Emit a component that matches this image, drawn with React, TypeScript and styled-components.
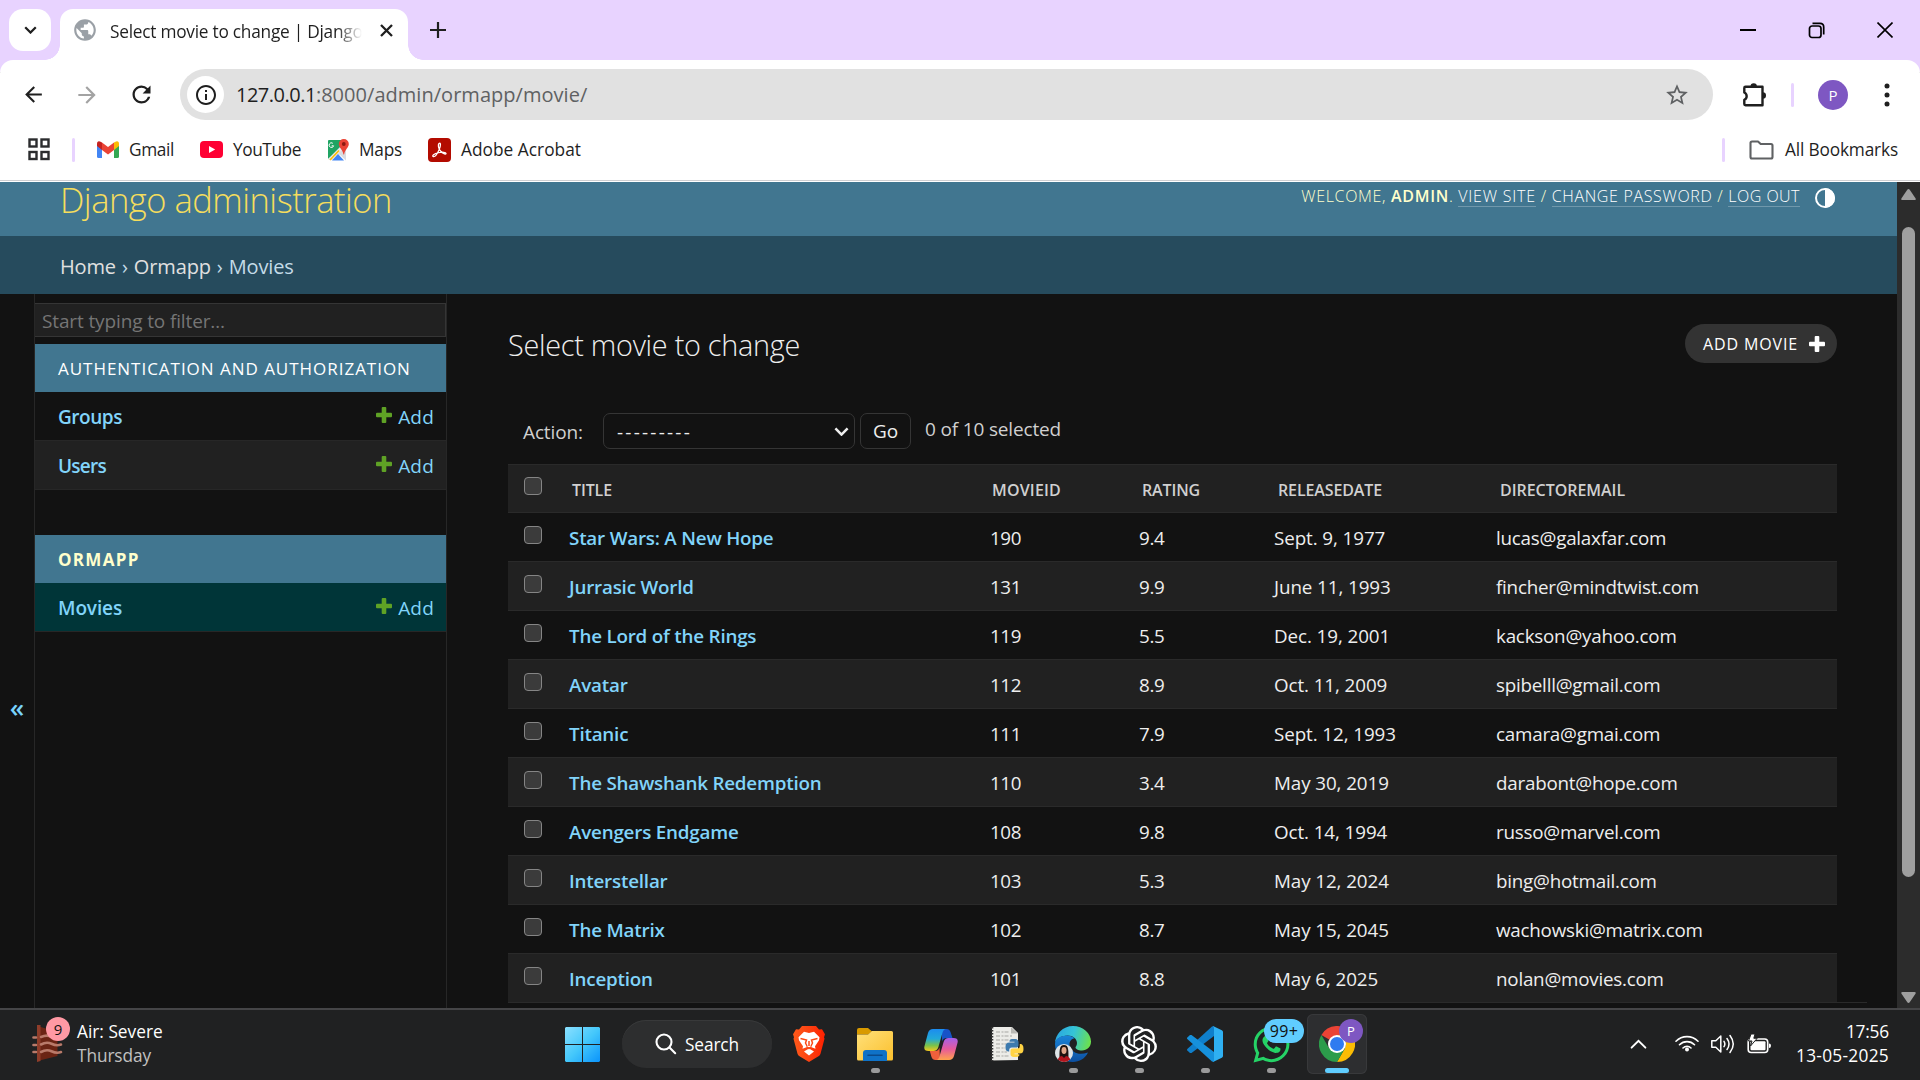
import React from 'react';
import styled, { createGlobalStyle, css } from 'styled-components';
import { MdArrowBack, MdArrowForward, MdRefresh, MdStarOutline, MdPublic, MdInfoOutline } from 'react-icons/md';
import { FaWhatsapp } from 'react-icons/fa';
import { SiOpenai } from 'react-icons/si';

const Global = createGlobalStyle`
  *, *::before, *::after { box-sizing: border-box; }
  body {
    margin: 0;
    background: #121212;
    font-family: "Open Sans", "Noto Sans", sans-serif;
    overflow: hidden;
  }
  svg { display: block; flex: none; }
`;

const Screen = styled.div`
  display: flex;
  flex-direction: column;
  width: 1920px;
  height: 1080px;
  overflow: hidden;
`;

/* ---------- Browser chrome ---------- */

const TabStrip = styled.div`
  display: flex;
  height: 72px;
  margin-bottom: -12px;
  padding: 9px 0 0 9px;
  background: #e8d3ff;
`;

const TabSearch = styled.button`
  display: flex;
  align-items: center;
  justify-content: center;
  width: 42px;
  height: 42px;
  margin-right: 9px;
  padding: 0;
  border: 0;
  border-radius: 14px;
  background: #fff;
`;

const Tab = styled.div`
  position: relative;
  display: flex;
  align-items: center;
  width: 348px;
  height: 51px;
  padding: 0 0 9px 12px;
  border-radius: 13px 13px 0 0;
  background: #fff;
  &::before,
  &::after {
    content: '';
    position: absolute;
    bottom: 0;
    width: 15px;
    height: 15px;
  }
  &::before {
    left: -15px;
    background: radial-gradient(circle at 0 0, transparent 14.5px, #fff 15px);
  }
  &::after {
    right: -15px;
    background: radial-gradient(circle at 100% 0, transparent 14.5px, #fff 15px);
  }
`;

const TabTitle = styled.div`
  flex: none;
  width: 260px;
  margin: 3px 10px 0 12px;
  white-space: nowrap;
  font-size: 17.3px;
  line-height: 24px;
  letter-spacing: -0.25px;
  color: #1f1f1f;
  mask-image: linear-gradient(90deg, #000 226px, transparent 252px);
`;

const ToolbarItem = styled.div<{ $ml: number }>`
  display: flex;
  align-items: center;
  height: 42px;
  margin-left: ${(p) => p.$ml}px;
`;

const WindowControls = styled.div`
  display: flex;
  align-items: center;
  gap: 52px;
  height: 42px;
  margin: 0 27px 0 auto;
`;

const Toolbar = styled.div`
  display: flex;
  align-items: center;
  height: 69px;
  padding: 0 21px;
  flex: none;
  border-radius: 13px 13px 0 0;
  background: #fff;
  color: #1f1f1f;
`;

const NavButtons = styled.div`
  display: flex;
  align-items: center;
  gap: 28px;
  width: 159px;
`;

const AddressBar = styled.div`
  display: flex;
  align-items: center;
  flex: none;
  width: 1533px;
  height: 51px;
  padding: 0 23px 0 7px;
  border-radius: 26px;
  background: #e1e1e1;
`;

const SiteInfo = styled.div`
  display: flex;
  align-items: center;
  justify-content: center;
  width: 37px;
  height: 37px;
  margin-right: 12px;
  border-radius: 50%;
  background: #fff;
`;

const Url = styled.div`
  flex: 1;
  font-size: 20px;
  line-height: 28px;
  color: #5f6163;
  letter-spacing: 0.03px;
`;

const Host = styled.span`
  color: #1f1f1f;
  letter-spacing: -0.5px;
`;

const Divider = styled.div<{ $m: string }>`
  flex: none;
  width: 3px;
  height: 24px;
  margin: ${(p) => p.$m};
  border-radius: 2px;
  background: #e8d3ff;
`;

const Avatar = styled.div<{ $size: number; $font: number }>`
  display: flex;
  align-items: center;
  justify-content: center;
  width: ${(p) => p.$size}px;
  height: ${(p) => p.$size}px;
  border-radius: 50%;
  background: #7e57c2;
  color: #fff;
  font-size: ${(p) => p.$font}px;
`;

const BookmarksBar = styled.div`
  display: flex;
  align-items: center;
  flex: none;
  height: 53px;
  padding: 0 22px 11px 28px;
  border-bottom: 1px solid #fff;
  background: linear-gradient(#cfcfd2, #cfcfd2) 0 51px / 100% 1px no-repeat #fff;
`;

const Bookmark = styled.div<{ $gap: number; $after: number; $ls: number }>`
  display: flex;
  align-items: center;
  gap: ${(p) => p.$gap}px;
  margin-right: ${(p) => p.$after}px;
  font-size: 17.3px;
  line-height: 24px;
  letter-spacing: ${(p) => p.$ls}px;
  color: #1f1f1f;
`;

/* ---------- Django admin ---------- */

const Viewport = styled.div`
  display: flex;
  height: 826px;
  flex: none;
`;

const Page = styled.div`
  display: flex;
  flex-direction: column;
  width: 1897px;
  background: #121212;
`;

const SiteHeader = styled.header`
  display: flex;
  justify-content: space-between;
  height: 54px;
  padding: 0 62px 0 60px;
  background: #417690;
`;

const SiteName = styled.h1`
  margin: 0;
  font-size: 34.5px;
  line-height: 35px;
  font-weight: 300;
  letter-spacing: -0.5px;
  color: #f5dd5d;
`;

const UserTools = styled.div`
  display: flex;
  align-items: flex-start;
  padding-top: 3px;
  font-size: 16px;
  font-weight: 300;
  line-height: 22px;
  color: #ffc;
  white-space: pre;
  letter-spacing: 0.68px;
`;

const UserName = styled.strong`
  font-weight: 600;
`;

const ToolLink = styled.a<{ $ls: number }>`
  height: 22px;
  letter-spacing: ${(p) => p.$ls}px;
  border-bottom: 1px solid rgba(255, 255, 255, 0.25);
  color: #fff;
`;

const ThemeToggle = styled.span`
  padding: 3px 0 0 15px;
`;

const Breadcrumbs = styled.nav`
  display: flex;
  align-items: center;
  gap: 6px;
  height: 58px;
  padding: 2px 0 0 60px;
  background: #264b5d;
  font-size: 20px;
  letter-spacing: -0.14px;
  color: #c4dce8;
`;

const Crumb = styled.span`
  color: #e0e0e0;
`;

const Body = styled.div`
  display: flex;
  flex: 1;
`;

const NavToggle = styled.div`
  flex: none;
  width: 34px;
  padding-top: 398px;
  font-size: 26px;
  font-weight: 600;
  line-height: 30px;
  text-align: center;
  color: #79d2fb;
`;

const Sidebar = styled.aside`
  flex: none;
  width: 413px;
  padding-top: 9px;
  border: solid #272727;
  border-width: 0 1px;
`;

const Filter = styled.div`
  height: 34px;
  margin-bottom: 7px;
  padding-left: 7px;
  border: 1px solid #353535;
  border-left: 0;
  background: #212121;
  font-size: 19px;
  line-height: 34px;
  letter-spacing: -0.13px;
  color: #757575;
`;

const Module = styled.section`
  margin-bottom: 45px;
`;

const Caption = styled.div<{ $current?: boolean }>`
  height: 48px;
  padding-left: 23px;
  background: #417690;
  font-size: 17px;
  line-height: 49.5px;
  letter-spacing: 0.97px;
  color: #fff;
  ${(p) => p.$current && css`font-weight: 700; letter-spacing: 1.3px; color: #ffc;`}
`;

const ModelRow = styled.div<{ $bg: string }>`
  display: flex;
  align-items: center;
  height: 49px;
  padding: 1px 12px 0 23px;
  border-bottom: 1px solid #272727;
  background: ${(p) => p.$bg};
  font-size: 19px;
  color: #81d4fa;
`;

const ModelName = styled.span<{ $ls: number }>`
  flex: 1;
  font-weight: 600;
  letter-spacing: ${(p) => p.$ls}px;
`;

const AddLink = styled.span`
  display: flex;
  align-items: center;
  gap: 6px;
  letter-spacing: 0.2px;
  svg { margin-bottom: 3px; }
`;

const Main = styled.main`
  flex: 1;
  min-width: 0;
  padding: 30px 60px 0 61px;
`;

const TitleRow = styled.div`
  display: flex;
  justify-content: space-between;
  height: 89px;
`;

const Title = styled.h2`
  margin: 0;
  font-size: 28.8px;
  line-height: 42px;
  font-weight: 300;
  letter-spacing: -0.26px;
  color: #eee;
`;

const AddButton = styled.a`
  display: flex;
  align-items: center;
  justify-content: space-between;
  width: 152px;
  height: 39px;
  padding: 0 12px 0 18px;
  border-radius: 20px;
  background: #333;
  font-size: 16px;
  letter-spacing: 0.86px;
  color: #fff;
`;

const Actions = styled.div`
  display: flex;
  align-items: center;
  height: 36px;
  margin-bottom: 15px;
  padding-left: 15px;
  font-size: 19px;
  letter-spacing: -0.13px;
  color: #d0d0d0;
`;

const ActionLabel = styled.label`
  width: 80px;
  padding-top: 2px;
`;

const Select = styled.div`
  display: flex;
  align-items: center;
  justify-content: space-between;
  width: 252px;
  height: 36px;
  margin-right: 5px;
  padding: 1px 5px 0 13px;
  border: 1px solid #353535;
  border-radius: 7px;
  letter-spacing: 2.22px;
  color: #eee;
`;

const Go = styled.button`
  width: 51px;
  height: 36px;
  margin-right: 14px;
  padding: 0;
  border: 1px solid #353535;
  border-radius: 7px;
  background: #121212;
  font: 19px/34px "Open Sans", sans-serif;
  letter-spacing: -0.12px;
  color: #eee;
`;

const Counter = styled.span`
  padding-bottom: 5px;
  letter-spacing: -0.16px;
`;

const Row = styled.div<{ $odd?: boolean }>`
  display: grid;
  grid-template-columns: 61px 421px 149px 135px 222px 1fr;
  align-items: center;
  height: 49px;
  padding-top: 1px;
  border-bottom: 1px solid #2a2a2a;
  background: ${(p) => (p.$odd ? '#212121' : '#121212')};
  font-size: 18.8px;
  color: #eee;
`;

const HeadRow = styled(Row)`
  border-top: 1px solid #2a2a2a;
  padding-top: 2px;
  font-size: 16px;
  font-weight: 600;
  color: #d0d0d0;
`;

const HeadCell = styled.span<{ $ls: number; $pl: number }>`
  padding-left: ${(p) => p.$pl}px;
  letter-spacing: ${(p) => p.$ls}px;
`;

const Checkbox = styled.span<{ $head?: boolean }>`
  width: 18px;
  height: 18px;
  margin: 0 0 ${(p) => (p.$head ? 7 : 5)}px 16px;
  border: 1.5px solid #858585;
  border-radius: 4px;
  background: #3b3b3b;
`;

const MovieLink = styled.a`
  font-weight: 600;
  letter-spacing: -0.2px;
  color: #81d4fa;
`;

const Cell = styled.span<{ $ls: number }>`
  letter-spacing: ${(p) => p.$ls}px;
`;

const TableEnd = styled.div`
  height: 1px;
  margin: -1px -30px 0 0;
  background: #2a2a2a;
`;

const Scrollbar = styled.div`
  display: flex;
  flex-direction: column;
  align-items: center;
  justify-content: space-between;
  width: 23px;
  padding: 7px 0 5px;
  background: #2c2c2c;
`;

const Thumb = styled.div`
  width: 13px;
  height: 650px;
  margin-top: -88px;
  border-radius: 7px;
  background: #9f9f9f;
`;

/* ---------- Taskbar ---------- */

const Taskbar = styled.footer`
  display: grid;
  grid-template-columns: 549px 1fr 500px;
  height: 72px;
  border-top: 2px solid #454547;
  background: #202122;
  color: #fff;
`;

const Widget = styled.div`
  display: flex;
  padding: 9px 0 0 32px;
  font-size: 17.3px;
  line-height: 24px;
`;

const WidgetText = styled.div`
  padding-top: 1px;
`;

const WidgetIcon = styled.div`
  position: relative;
  width: 45px;
  padding-top: 6px;
`;

const Badge = styled.span`
  position: absolute;
  left: 14px;
  top: -2px;
  width: 24px;
  height: 24px;
  border-radius: 50%;
  background: #ff99a4;
  font-size: 15px;
  line-height: 24px;
  text-align: center;
  color: #111;
`;

const Muted = styled.div`
  letter-spacing: -0.11px;
  color: #c0c0c0;
`;

const Apps = styled.div`
  display: flex;
  align-items: center;
  padding-bottom: 2px;
`;

const AppSlot = styled.div<{ $active?: boolean }>`
  position: relative;
  display: flex;
  align-items: center;
  justify-content: center;
  flex: none;
  width: 60px;
  height: 60px;
  margin: 0 3px;
  border-radius: 6px;
  ${(p) => p.$active && css`background: #2d2e30; box-shadow: inset 0 0 0 1px #38393b;`}
`;

const Indicator = styled.span<{ $active?: boolean }>`
  position: absolute;
  bottom: 1px;
  width: ${(p) => (p.$active ? 24 : 9)}px;
  height: 5px;
  border-radius: 3px;
  background: ${(p) => (p.$active ? '#60cdff' : '#9a9a9b')};
`;

const SearchPill = styled.div`
  display: flex;
  align-items: center;
  gap: 8px;
  flex: none;
  width: 150px;
  height: 48px;
  margin: 0 4px 0 7px;
  padding-left: 33px;
  border-radius: 24px;
  background: #2d2e2f;
  box-shadow: inset 0 1px 0 #38393a;
  font-size: 17.3px;
  letter-spacing: -0.12px;
`;

const CountBadge = styled.span`
  position: absolute;
  left: 23px;
  top: 5px;
  width: 40px;
  height: 24px;
  border-radius: 12px;
  background: #60cdff;
  font-size: 16px;
  line-height: 24px;
  letter-spacing: 0.3px;
  text-align: center;
  color: #111;
`;

const ProfileBadge = styled.span`
  position: absolute;
  left: 32px;
  top: 5px;
`;

const Tray = styled.div`
  display: flex;
  align-items: center;
  justify-content: flex-end;
  padding: 0 31px 2px 0;
`;

const TrayIcons = styled.div`
  display: flex;
  gap: 12px;
  margin: 0 25px 0 28px;
`;

const Clock = styled.div`
  font-size: 17.3px;
  line-height: 24px;
  text-align: right;
  letter-spacing: -0.2px;
`;

const DateText = styled.div`
  letter-spacing: 0.28px;
`;

/* ---------- Drawings ---------- */

const Plus = ({ color }: { color: string }) => (
  <svg width="16" height="16" viewBox="0 0 16 16" fill={color}>
    <rect x="5.7" width="4.6" height="16" rx="1" />
    <rect y="5.7" width="16" height="4.6" rx="1" />
  </svg>
);

const Chevron = ({ color, up, w = 12 }: { color: string; up?: boolean; w?: number }) => (
  <svg width={w} height={w * 0.65} viewBox="0 0 12 8" fill="none" stroke={color} strokeWidth={up ? 1.4 : 2.1}>
    <path d={up ? 'M1 7l5-5 5 5' : 'M1 1.2l5 5 5-5'} strokeLinecap={up ? 'round' : 'butt'} />
  </svg>
);

const Gmail = () => (
  <svg width="22" height="17" viewBox="0 0 22 17">
    <path d="M0 3v12.5Q0 17 1.5 17H5V6.5z" fill="#4285f4" />
    <path d="M22 3v12.5q0 1.5-1.5 1.5H17V6.5z" fill="#34a853" />
    <path d="M17 1.5L19 .4q3-.8 3 2.6v2L17 9z" fill="#fbbc04" />
    <path d="M5 1.5L3 .4Q0-.4 0 3v2l5 4z" fill="#c5221f" />
    <path d="M5 1.5l6 4.6 6-4.6V9l-6 4.5L5 9z" fill="#ea4335" />
  </svg>
);

const YouTube = () => (
  <svg width="23" height="17" viewBox="0 0 23 17">
    <rect width="23" height="17" rx="4" fill="#f03" />
    <path d="M9 5l6.2 3.5L9 12z" fill="#fff" />
  </svg>
);

const Maps = () => (
  <svg width="22" height="22" viewBox="0 0 22 22">
    <path d="M1.500 1H15v8L1 20V1.800z" fill="#1fa463" />
    <path d="M1 20L13 8l4 4-9.500 9H2z" fill="#e9eaec" />
    <path d="M5 21.500l6-6.500 6 6.500z" fill="#4285f4" />
    <path d="M3 21l9-9.500" stroke="#fbbc04" strokeWidth="1.600" />
    <path d="M11 14l8 7.500V9z" fill="#dadce0" />
    <path d="M5.800 4.300a2.300 2.300 0 1 0 .800 2.500H4.700" fill="none" stroke="#fff" strokeWidth="1" />
    <path d="M16.800 0a5 5 0 0 1 5 5c0 3.500-3.600 5-4.700 10.500h-.6C15.400 10 11.800 8.500 11.800 5a5 5 0 0 1 5-5z" fill="#ea4335" />
    <circle cx="16.800" cy="5" r="1.900" fill="#8c1a11" />
  </svg>
);

const Acrobat = () => (
  <svg width="23" height="24" viewBox="0 0 23 24">
    <rect width="23" height="24" rx="4" fill="#b30b00" />
    <path
      d="M11 5.500c1.800-1.400 2 2.200 0 6.500-1.500 3.300-4 7-5.600 6.600-1.900-.6.700-2.900 5-3.900 4-.9 7.800-.5 7.600.8-.3 1.500-4.200-.3-6.200-3.300C10.200 9.800 10 6.400 11 5.500z"
      fill="none" stroke="#fff" strokeWidth="1.300"
    />
  </svg>
);

const AppsGrid = () => (
  <svg width="23" height="23" viewBox="0 0 23 23" fill="none" stroke="#2b2c2e" strokeWidth="2.400">
    <rect x="1.500" y="1.500" width="7" height="7" />
    <rect x="13.500" y="1.500" width="7" height="7" />
    <rect x="1.500" y="14" width="7" height="7" />
    <rect x="13.500" y="14" width="7" height="7" />
  </svg>
);

const Puzzle = () => (
  <svg width="26" height="26" viewBox="0 0 26 26">
    <path
      d="M3.500 4.700h17v4.500M20.500 16.500v6.800h-17q-1.200 0-1.200-1.200v-4.300a4 4 0 0 0 0-7.300V5.900q0-1.200 1.200-1.200M20.500 9v8"
      fill="none" stroke="#1f1f1f" strokeWidth="2.400" strokeLinejoin="round"
    />
    <path d="M8.500 4.500a3.200 3.200 0 0 1 6.400 0zM20.800 10.300a3.200 3.200 0 0 1 0 6.400z" fill="#1f1f1f" />
  </svg>
);

const Menu = () => (
  <svg width="6" height="24" viewBox="0 0 6 24" fill="#1f1f1f">
    <circle cx="3" cy="3" r="2.500" />
    <circle cx="3" cy="12" r="2.500" />
    <circle cx="3" cy="21" r="2.500" />
  </svg>
);

const Folder = () => (
  <svg width="25" height="20" viewBox="0 0 25 20" fill="none" stroke="#5f6163" strokeWidth="2.100">
    <path d="M1.500 3q0-1.500 1.500-1.500h6L11.700 4H22q1.500 0 1.500 1.500V17q0 1.500-1.500 1.500H3q-1.500 0-1.500-1.500z" strokeLinejoin="round" />
  </svg>
);

const Contrast = () => (
  <svg width="20" height="20" viewBox="0 0 20 20">
    <circle cx="10" cy="10" r="9" fill="none" stroke="#fff" strokeWidth="2" />
    <path d="M10 0a10 10 0 0 1 0 20z" fill="#fff" />
  </svg>
);

const AirQuality = () => (
  <svg width="31" height="37" viewBox="0 0 31 37">
    <path d="M5.500 1l20 6v24l-20 5z" fill="#6b2414" />
    <path d="M5 0h3.500v36L5 37z" fill="#8f3d2a" />
    <g fill="none" stroke="#b97a6a" strokeWidth="2.600" strokeLinecap="round">
      <path d="M1.500 12.500H4M1.500 20H4M1.500 27H4" />
      <path d="M9 12q5.500-2.500 10.500-.5t9.500.5M9 19.500q5.500-3 10.500-.7t9.500.8M9 27q5.500-3 10.500-.7t9.500.8" />
    </g>
  </svg>
);

const Windows = () => (
  <svg width="35" height="35" viewBox="0 0 35 35">
    <defs>
      <linearGradient id="win" gradientUnits="userSpaceOnUse" x1="0" y1="0" x2="35" y2="35">
        <stop offset="0" stopColor="#8be0ff" />
        <stop offset=".5" stopColor="#45c8fb" />
        <stop offset="1" stopColor="#0a94fb" />
      </linearGradient>
    </defs>
    <path fill="url(#win)" d="M1 0h16v17H0V1zM18 0h16l1 1v16H18zM0 18h17v17H1l-1-1zM18 18h17v16l-1 1H18z" />
  </svg>
);

const Magnifier = () => (
  <svg width="22" height="22" viewBox="0 0 22 22" fill="none" stroke="#fff" strokeWidth="2.100" strokeLinecap="round">
    <circle cx="9" cy="9" r="7.500" />
    <path d="M14.500 14.500l5.700 5.700" />
  </svg>
);

const Explorer = () => (
  <svg width="36" height="33" viewBox="0 0 36 33">
    <defs>
      <linearGradient id="fold" x1="0" y1="0" x2="1" y2="1">
        <stop offset="0" stopColor="#ffe07a" />
        <stop offset="1" stopColor="#fbc02d" />
      </linearGradient>
    </defs>
    <path d="M0 2q0-2 2-2h9l4 3.500-4 3H0z" fill="#d99a00" />
    <path d="M0 6.500h11L15 3h19.500Q36 3 36 4.500V31q0 1.500-1.500 1.500h-33Q0 32.500 0 31z" fill="url(#fold)" />
    <path d="M6 33v-8q0-3 3-3h18q3 0 3 3v8z" fill="#0f72c8" />
    <path d="M11 27.200h14" stroke="#0a4a8c" strokeWidth="1.600" strokeLinecap="round" />
  </svg>
);

const Copilot = () => (
  <svg width="34" height="31" viewBox="0 0 34 31">
    <defs>
      <linearGradient id="cpA" x1="0" y1="0" x2="0" y2="1">
        <stop offset="0" stopColor="#1c8cf0" />
        <stop offset=".45" stopColor="#22a9d8" />
        <stop offset=".75" stopColor="#7bc24a" />
        <stop offset="1" stopColor="#f4c81e" />
      </linearGradient>
      <linearGradient id="cpB" x1="0" y1="0" x2="0" y2="1">
        <stop offset="0" stopColor="#a560ea" />
        <stop offset=".5" stopColor="#e65a9c" />
        <stop offset="1" stopColor="#ffa24c" />
      </linearGradient>
    </defs>
    <path d="M18 0h4.500q3 0 4 3l2 6h-6q-3.500 0-4.500 3.500z" fill="#1753c8" />
    <path d="M16 31h-4.500q-3 0-4-3l-1.700-6H11q3.500 0 4.500-3.500z" fill="#f0603c" />
    <path d="M9 0h13q-2.500 0-3.600 4l-4 14q-1.200 4-5 4H4.500Q-.5 22 .4 17.500L4 4Q5.200 0 9 0z" fill="url(#cpA)" />
    <path d="M25 31H12q2.500 0 3.600-4l4-14q1.200-4 5-4h4.900q5 0 4.100 4.500L30 27q-1.200 4-5 4z" fill="url(#cpB)" />
  </svg>
);

const Notepad = () => (
  <svg width="33" height="36" viewBox="0 0 33 36">
    <path d="M1 1h20l6 6v27l-26 .5z" fill="#ecece8" />
    <path d="M20 1v6.500h7z" fill="#b9b9b5" />
    <path d="M1.200 1v34" stroke="#333" strokeWidth="2.200" strokeDasharray="1.500 1.500" />
    <g stroke="#a7a7a3" strokeWidth="1" strokeDasharray="4 1.500 2 1">
      <path d="M5 6h13M5 10h17M5 14h14M5 18h11M5 22h9M5 26h11M5 30h13" />
    </g>
    <path d="M23 13c4 0 4.500 1.300 4.500 3.500v3q0 2-2.300 2h-4.500q-2.500 0-2.500 2.500v1.500c-3 0-3.700-1.500-3.700-4.500s1-4.500 4-4.500h5v-.8h-5c0-2.300 1-2.700 4.500-2.700z" fill="#3c7aae" />
    <path d="M24 31c-4 0-4.500-1.300-4.500-3.500v-3q0-2 2.300-2h4.500q2.500 0 2.500-2.500v-2c3 0 3.700 2 3.700 5s-1 4.500-4 4.500h-5v.8h5c0 2.300-1 2.700-4.500 2.700z" fill="#ffd343" />
  </svg>
);

const Edge = () => (
  <svg width="36" height="36" viewBox="0 0 36 36">
    <defs>
      <linearGradient id="edA" x1="0" y1=".3" x2="1" y2=".5">
        <stop offset="0" stopColor="#2aa6e0" />
        <stop offset=".5" stopColor="#35c4d7" />
        <stop offset="1" stopColor="#6be04f" />
      </linearGradient>
      <linearGradient id="edB" x1="0" y1="0" x2="0" y2="1">
        <stop offset="0" stopColor="#1a84d8" />
        <stop offset="1" stopColor="#0c4fa0" />
      </linearGradient>
      <clipPath id="face"><circle cx="9" cy="27" r="9" /></clipPath>
    </defs>
    <path d="M0 18C0 8 8 0 18 0s18 7.500 18 15.500c0 5.500-4 9-9 9-4 0-6.500-1.500-6.500-3 0-1 1.500-1.800 1.500-4.500 0-4-4-7.500-9.500-7.500S0 13 0 18z" fill="url(#edA)" />
    <path d="M0 18c0-5 5.500-8.500 12-8.500 3 0 5.500 1 7.500 2.700-4 .8-6 4.300-4.500 8.300C17 27 24 29.500 33 26.500 30 32.500 24.500 36 18 36 8 36 0 28 0 18z" fill="url(#edB)" />
    <g clipPath="url(#face)">
      <rect y="18" width="18" height="18" fill="#dfe4e6" />
      <path d="M4.500 34c0-9-.5-15 4.500-15s4.500 6 4.500 15z" fill="#1d1310" />
      <ellipse cx="9" cy="24.500" rx="2.500" ry="3.400" fill="#e0a88a" />
      <path d="M2 36q1-5.500 5-6l2 2 2-2q4 .5 5 6z" fill="#b3151d" />
    </g>
  </svg>
);

const VsCode = () => (
  <svg width="36" height="36" viewBox="0 0 36 36">
    <path d="M27 0v10L4.500 27 3 27 .3 24.500q-.6-.8 0-1.600L25 .6z" fill="#0f7fcb" />
    <path d="M27 36V26L4.500 9H3L.3 11.500q-.6.8 0 1.600L25 35.400z" fill="#1691dc" />
    <path d="M26 0l8.800 4.200Q36 4.800 36 6v24q0 1.200-1.200 1.800L26 36q1-.5 1-2V2q0-1.500-1-2z" fill="#2fb0f2" />
  </svg>
);

const Chrome = () => (
  <svg width="36" height="36" viewBox="0 0 36 36">
    <path d="M2.400 9A18 18 0 0 1 33.600 9H18v9z" fill="#ea4335" />
    <path d="M18 36l7.800-13.500Q28 16 25 12.500L18 9h15.600A18 18 0 0 1 18 36z" fill="#fbbc04" />
    <path d="M2.400 9A18 18 0 0 0 18 36l7.800-13.500L18 18l-7.800 4.500z" fill="#2c9c4b" />
    <circle cx="18" cy="18" r="9" fill="#fff" />
    <circle cx="18" cy="18" r="7" fill="#2f7bf0" />
  </svg>
);

const Brave = () => (
  <svg width="32" height="36" viewBox="0 0 32 36">
    <defs>
      <linearGradient id="brv" x1="0" y1="0" x2="1" y2="0">
        <stop offset="0" stopColor="#ff5a1a" />
        <stop offset=".5" stopColor="#fb4212" />
        <stop offset="1" stopColor="#ff2000" />
      </linearGradient>
    </defs>
    <path d="M9 0h14l3 3.500 3-.3 3 5-1 3 .5 1.500-4 15q-.5 1.500-2 2.600L16 36l-9.500-5.700q-1.500-1.100-2-2.600L.5 12.700 1 11.200l-1-3 3-5 3 .3z" fill="url(#brv)" />
    <path d="M16 7l5-1.200 5.500 5.500-.5 3-4 6 .5 2.500-4-1.500h-5l-4 1.500.5-2.500-4-6-.5-3L11 5.800z" fill="#fff" />
    <path d="M16 22.500l5 3-5 4-5-4z" fill="#fff" />
    <path d="M7.500 12.500l6 1.500-1 3 1.500 3M24.500 12.500l-6 1.500 1 3-1.500 3M16 15v5M13.500 20.500l2.500 2 2.500-2" fill="none" stroke="#fb4a16" strokeWidth="1.500" />
  </svg>
);

const Wifi = () => (
  <svg width="24" height="18" viewBox="0 0 24 18" fill="none" stroke="#fff" strokeWidth="1.600" strokeLinecap="round">
    <path d="M1 7.200a15.500 15.500 0 0 1 22 0M4.500 10.700a10.600 10.600 0 0 1 15 0M8 14a5.700 5.700 0 0 1 8 0" />
    <circle cx="12" cy="15.600" r="2" fill="#fff" stroke="none" />
  </svg>
);

const Volume = () => (
  <svg width="24" height="20" viewBox="0 0 24 20" fill="none" stroke="#fff" strokeWidth="1.500" strokeLinecap="round" strokeLinejoin="round">
    <path d="M.8 6.700h4l5-4.700v16l-5-4.700h-4z" />
    <path d="M13 7.300q1.700 2.700 0 5.400M16 4.500q4 5.500 0 11M19 1.500q6.500 8.500 0 17" />
  </svg>
);

const Battery = () => (
  <svg width="24" height="20" viewBox="0 0 24 20">
    <rect x="1.200" y="5" width="19.500" height="13.500" rx="3" fill="none" stroke="#fff" strokeWidth="1.600" />
    <rect x="3.500" y="7.300" width="15" height="9" rx="1" fill="#fff" />
    <path d="M22 9.500q2 0 2 2.200T22 14z" fill="#fff" />
    <path d="M4 0h4L6.800 4.300h3.400L3.500 12 5 7H1.500z" fill="#fff" stroke="#202122" strokeWidth="1" />
  </svg>
);

/* ---------- Data ---------- */

const movies = [
  ['Star Wars: A New Hope', '190', '9.4', 'Sept. 9, 1977', 'lucas@galaxfar.com'],
  ['Jurrasic World', '131', '9.9', 'June 11, 1993', 'fincher@mindtwist.com'],
  ['The Lord of the Rings', '119', '5.5', 'Dec. 19, 2001', 'kackson@yahoo.com'],
  ['Avatar', '112', '8.9', 'Oct. 11, 2009', 'spibelll@gmail.com'],
  ['Titanic', '111', '7.9', 'Sept. 12, 1993', 'camara@gmai.com'],
  ['The Shawshank Redemption', '110', '3.4', 'May 30, 2019', 'darabont@hope.com'],
  ['Avengers Endgame', '108', '9.8', 'Oct. 14, 1994', 'russo@marvel.com'],
  ['Interstellar', '103', '5.3', 'May 12, 2024', 'bing@hotmail.com'],
  ['The Matrix', '102', '8.7', 'May 15, 2045', 'wachowski@matrix.com'],
  ['Inception', '101', '8.8', 'May 6, 2025', 'nolan@movies.com'],
];

const Model = ({ name, bg, ls }: { name: string; bg: string; ls: number }) => (
  <ModelRow $bg={bg}>
    <ModelName $ls={ls}>{name}</ModelName>
    <AddLink><Plus color="#5fa225" />Add</AddLink>
  </ModelRow>
);

export default function App() {
  return (
    <Screen>
      <Global />
      <TabStrip>
        <TabSearch><Chevron color="#1f1f1f" w={13} /></TabSearch>
        <Tab>
          <MdPublic size={26} color="#9aa0a6" />
          <TabTitle>Select movie to change | Django</TabTitle>
          <svg width="13" height="13" viewBox="0 0 13 13" stroke="#1f1f1f" strokeWidth="2.300">
            <path d="M1 1l11 11M12 1L1 12" />
          </svg>
        </Tab>
        <ToolbarItem $ml={22}>
          <svg width="16" height="16" viewBox="0 0 16 16" stroke="#1f1f1f" strokeWidth="2.200">
            <path d="M8 0v16M0 8h16" />
          </svg>
        </ToolbarItem>
        <WindowControls>
          <svg width="16" height="16" viewBox="0 0 16 16" stroke="#000" strokeWidth="2"><path d="M0 8h16" /></svg>
          <svg width="17" height="17" viewBox="0 0 17 17" fill="none" stroke="#000" strokeWidth="1.700">
            <rect x="1.500" y="4" width="11.500" height="11.500" rx="2.500" />
            <path d="M4.500 1.300H12q3.700 0 3.700 3.700v7.500" />
          </svg>
          <svg width="16" height="16" viewBox="0 0 16 16" stroke="#000" strokeWidth="1.600"><path d="M.5.5l15 15M15.500.5l-15 15" /></svg>
        </WindowControls>
      </TabStrip>
      <Toolbar>
        <NavButtons>
          <MdArrowBack size={25} />
          <MdArrowForward size={26} color="#a3a3a3" />
          <MdRefresh size={27} />
        </NavButtons>
        <AddressBar>
          <SiteInfo><MdInfoOutline size={24} /></SiteInfo>
          <Url><Host>127.0.0.1</Host>:8000/admin/ormapp/movie/</Url>
          <MdStarOutline size={26} color="#5f6163" />
        </AddressBar>
        <ToolbarItem $ml={29}><Puzzle /></ToolbarItem>
        <Divider $m="0 0 0 23px" />
        <ToolbarItem $ml={24}><Avatar $size={30} $font={15}>P</Avatar></ToolbarItem>
        <ToolbarItem $ml={36}><Menu /></ToolbarItem>
      </Toolbar>
      <BookmarksBar>
        <AppsGrid />
        <Divider $m="0 22px 0 21px" />
        <Bookmark $gap={10} $after={26} $ls={-0.38}><Gmail />Gmail</Bookmark>
        <Bookmark $gap={10} $after={26} $ls={-0.44}><YouTube />YouTube</Bookmark>
        <Bookmark $gap={10} $after={26} $ls={-0.24}><Maps />Maps</Bookmark>
        <Bookmark $gap={10} $after={0} $ls={0.03}><Acrobat />Adobe Acrobat</Bookmark>
        <Divider $m="0 24px 0 auto" />
        <Bookmark $gap={11} $after={0} $ls={-0.17}><Folder />All Bookmarks</Bookmark>
      </BookmarksBar>

      <Viewport>
        <Page>
          <SiteHeader>
            <SiteName>Django administration</SiteName>
            <UserTools>
              {'WELCOME, '}<UserName>ADMIN</UserName>{'. '}
              <ToolLink $ls={0.78}>VIEW SITE</ToolLink>{' / '}
              <ToolLink $ls={0.66}>CHANGE PASSWORD</ToolLink>{' / '}
              <ToolLink $ls={0.5}>LOG OUT</ToolLink>
              <ThemeToggle><Contrast /></ThemeToggle>
            </UserTools>
          </SiteHeader>
          <Breadcrumbs>
            <Crumb>Home</Crumb>›<Crumb>Ormapp</Crumb>›<span>Movies</span>
          </Breadcrumbs>
          <Body>
            <NavToggle>«</NavToggle>
            <Sidebar>
              <Filter>Start typing to filter…</Filter>
              <Module>
                <Caption>AUTHENTICATION AND AUTHORIZATION</Caption>
                <Model name="Groups" bg="#121212" ls={-0.46} />
                <Model name="Users" bg="#212121" ls={-0.75} />
              </Module>
              <Module>
                <Caption $current>ORMAPP</Caption>
                <Model name="Movies" bg="#003538" ls={-0.12} />
              </Module>
            </Sidebar>
            <Main>
              <TitleRow>
                <Title>Select movie to change</Title>
                <AddButton>ADD MOVIE<Plus color="#fff" /></AddButton>
              </TitleRow>
              <Actions>
                <ActionLabel>Action:</ActionLabel>
                <Select>---------<Chevron color="#eee" w={15} /></Select>
                <Go>Go</Go>
                <Counter>0 of 10 selected</Counter>
              </Actions>
              <HeadRow $odd>
                <Checkbox $head />
                <HeadCell $pl={3} $ls={-0.12}>TITLE</HeadCell>
                <HeadCell $pl={2} $ls={0.18}>MOVIEID</HeadCell>
                <HeadCell $pl={3} $ls={-0.14}>RATING</HeadCell>
                <HeadCell $pl={4} $ls={-0.12}>RELEASEDATE</HeadCell>
                <HeadCell $pl={4} $ls={-0.04}>DIRECTOREMAIL</HeadCell>
              </HeadRow>
              {movies.map(([title, id, rating, date, email], i) => (
                <Row key={id} $odd={i % 2 === 1}>
                  <Checkbox />
                  <MovieLink>{title}</MovieLink>
                  <Cell $ls={-0.4}>{id}</Cell>
                  <Cell $ls={-0.3}>{rating}</Cell>
                  <Cell $ls={-0.08}>{date}</Cell>
                  <Cell $ls={-0.22}>{email}</Cell>
                </Row>
              ))}
              <TableEnd />
            </Main>
          </Body>
        </Page>
        <Scrollbar>
          <svg width="15" height="11" viewBox="0 0 15 11" fill="#9f9f9f"><path d="M7.500 0q.7 0 1.200.7l5.800 8.500q.8 1.800-1 1.800h-12q-1.800 0-1-1.800L6.300.7Q6.800 0 7.500 0z" /></svg>
          <Thumb />
          <svg width="15" height="11" viewBox="0 0 15 11" fill="#9f9f9f"><path d="M7.500 11q.7 0 1.200-.7l5.800-8.500q.8-1.800-1-1.800h-12Q-.3 0 .5 1.800l5.800 8.500q.5.7 1.200.7z" /></svg>
        </Scrollbar>
      </Viewport>

      <Taskbar>
        <Widget>
          <WidgetIcon><AirQuality /><Badge>9</Badge></WidgetIcon>
          <WidgetText>
            <div>Air: Severe</div>
            <Muted>Thursday</Muted>
          </WidgetText>
        </Widget>
        <Apps>
          <AppSlot><Windows /></AppSlot>
          <SearchPill><Magnifier />Search</SearchPill>
          <AppSlot><Brave /></AppSlot>
          <AppSlot><Explorer /><Indicator /></AppSlot>
          <AppSlot><Copilot /></AppSlot>
          <AppSlot><Notepad /></AppSlot>
          <AppSlot><Edge /><Indicator /></AppSlot>
          <AppSlot><SiOpenai size={36} /><Indicator /></AppSlot>
          <AppSlot><VsCode /><Indicator /></AppSlot>
          <AppSlot><FaWhatsapp size={41} color="#25d366" /><Indicator /><CountBadge>99+</CountBadge></AppSlot>
          <AppSlot $active><Chrome /><Indicator $active /><ProfileBadge><Avatar $size={24} $font={13}>P</Avatar></ProfileBadge></AppSlot>
        </Apps>
        <Tray>
          <Chevron color="#fff" up w={17} />
          <TrayIcons><Wifi /><Volume /><Battery /></TrayIcons>
          <Clock>17:56<DateText>13-05-2025</DateText></Clock>
        </Tray>
      </Taskbar>
    </Screen>
  );
}
